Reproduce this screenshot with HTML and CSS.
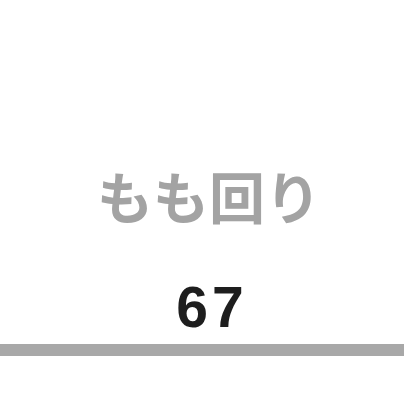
FILE: index.html
```html
<!DOCTYPE html>
<html lang="ja">
<head>
  <meta charset="UTF-8">
  <meta name="viewport" content="width=device-width, initial-scale=1.0">
  <title>もも回り</title>
  <link rel="stylesheet" href="styles.css">
</head>
<body>
  <div class="measure">
    <div class="label">もも回り</div>
    <div class="value">67</div>
  </div>
  <div class="bar"></div>
</body>
</html>
```

FILE: styles.css
```css
body {
  margin: 0;
  padding: 0;
  background-color: #ffffff;
  font-family: "Liberation Sans", "Noto Sans CJK JP", sans-serif;
}
.measure {
  display: flex;
  flex-direction: column;
  align-items: center;
  padding-top: 159px;
  padding-left: 14px;
}
.label {
  font-family: "Noto Sans CJK JP", sans-serif;
  font-size: 56px;
  font-weight: 700;
  color: #a3a3a3; /* light gray */
  line-height: 72px;
}
.value {
  font-size: 57px;
  font-weight: 700;
  letter-spacing: 4px;
  padding-left: 6px;
  color: #1e1e1e;
  line-height: 60px;
  margin-top: 46px;
}
.bar {
  height: 12px;
  background-color: #a8a8a8;
  margin-top: 7px;
}
```
